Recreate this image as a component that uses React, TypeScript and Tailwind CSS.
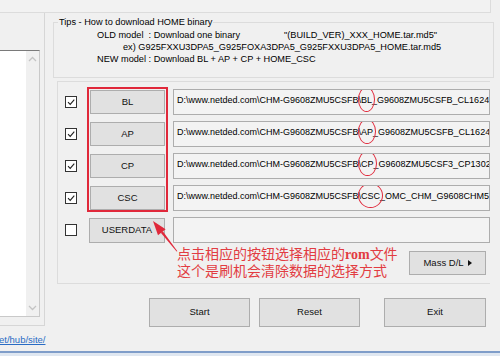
import React from "react";

const rows = [
  { label: "BL", mark: "BL", rest: "_G9608ZMU5CSFB_CL16241986_QB14543829_REV00_user_low_ship.tar.md5", checked: true },
  { label: "AP", mark: "AP", rest: "_G9608ZMU5CSFB_CL16241986_QB14543829_REV00_user_low_ship.tar.md5", checked: true },
  { label: "CP", mark: "CP", rest: "_G9608ZMU5CSF3_CP13025867_CL16241986_QB14543829.tar.md5", checked: true },
  { label: "CSC", mark: "CSC", rest: "_OMC_CHM_G9608CHM5CSFB_CL16241986_QB14543829.tar.md5", checked: true },
];

const prefix = "D:\\www.netded.com\\CHM-G9608ZMU5CSFB\\";

function Checkbox({ checked }: { checked: boolean }) {
  return (
    <div className="w-[12px] h-[12px] shrink-0 bg-white border border-[#333333] flex items-center justify-center">
      {checked && (
        <svg width="10" height="10" viewBox="0 0 10 10">
          <path d="M2 5.2 L4.2 7.4 L8.3 2.6" fill="none" stroke="#222" strokeWidth="1.1" />
        </svg>
      )}
    </div>
  );
}

function Btn({ children, className = "" }: { children: React.ReactNode; className?: string }) {
  return (
    <div
      className={`flex items-center justify-center bg-[#e1e1e1] border border-[#adadad] text-[9.5px] text-[#111] ${className}`}
    >
      {children}
    </div>
  );
}

export default function App() {
  return (
    <div className="w-[500px] h-[356px] overflow-hidden bg-[#f0f0f0] flex flex-col font-['Liberation_Sans','Noto_Sans_CJK_SC',sans-serif] text-black">
      {/* top strip */}
      <div className="h-[13px] shrink-0 flex">
        <div className="w-[491px] border-r border-b border-[#dcdcdc] bg-[#f2f2f2]" />
      </div>

      <div className="flex h-[338px]">
        {/* left column */}
        <div className="w-[45px] shrink-0 flex flex-col">
          <div className="h-[313px] border-r border-b border-[#d6d6d6] pt-[37px] pr-[4px]">
            <div className="h-[267px] w-[40px] flex bg-white border-t border-[#7a7a7a] border-r border-b border-r-[#c9c9c9] border-b-[#c9c9c9]">
              <div className="flex-1" />
              <div className="w-[13px] bg-[#f0f0f0] flex flex-col items-center justify-between py-[5px]">
                <svg width="9" height="6" viewBox="0 0 9 6">
                  <path d="M1 5 L4.5 1.5 L8 5" fill="none" stroke="#c4c4c4" strokeWidth="1.3" />
                </svg>
                <svg width="9" height="6" viewBox="0 0 9 6">
                  <path d="M1 1 L4.5 4.5 L8 1" fill="none" stroke="#c4c4c4" strokeWidth="1.3" />
                </svg>
              </div>
            </div>
          </div>
          <div className="mt-[8px] -ml-[1px] text-[9.5px] leading-[12px] text-[#2a6cc4] underline whitespace-nowrap">
            et/hub/site/
          </div>
        </div>

        {/* right column */}
        <div className="flex-1 flex flex-col">
          <fieldset className="ml-[8px] mt-[3px] w-[441px] h-[62px] border border-[#dcdcdc] px-[4px]">
            <legend className="text-[9.2px] leading-[12px] px-[1px]">Tips - How to download HOME binary</legend>
            <div className="text-[9.2px] leading-[12px] whitespace-nowrap pl-[39px] pt-[1px]">
              <div>
                <span className="inline-block w-[187px]">OLD model&nbsp; : Download one binary</span>
                <span>"(BUILD_VER)_XXX_HOME.tar.md5"</span>
              </div>
              <div className="pl-[26px]">ex) G925FXXU3DPA5_G925FOXA3DPA5_G925FXXU3DPA5_HOME.tar.md5</div>
              <div>NEW model : Download BL + AP + CP + HOME_CSC</div>
            </div>
          </fieldset>

          {/* file panel */}
          <div className="relative ml-[12px] mt-[3px] w-[433px] h-[203px] border-l border-t border-b border-[#dcdcdc] pt-[7px] flex flex-col">
            <div className="flex flex-col gap-[6px]">
              {rows.map((r, i) => (
                <div key={r.label} className="flex items-center h-[26px]">
                  <div className="ml-[7px]">
                    <Checkbox checked={r.checked} />
                  </div>
                  <Btn
                    className={`ml-[13px] w-[75px] h-[24px] ${i === 0 ? "border-[#2a7ad5]" : ""}`}
                  >
                    {r.label}
                  </Btn>
                  <div className="ml-[8px] w-[317px] h-[26px] bg-[#f3f3f3] border border-[#adadad] overflow-hidden whitespace-nowrap text-[9px] leading-[12px] pl-[3px] pt-[4px]">
                    {prefix}
                    <span className="relative">
                      {r.mark}
                      <span className="absolute -left-[3px] -right-[3px] -top-[8px] -bottom-[7px] rounded-[50%] border-[1.5px] border-[#e0283a]" />
                    </span>
                    {r.rest}
                  </div>
                </div>
              ))}
              <div className="flex items-center h-[26px]">
                <div className="ml-[7px]">
                  <Checkbox checked={false} />
                </div>
                <Btn className="ml-[12px] w-[76px] h-[25px]">USERDATA</Btn>
                <div className="ml-[8px] w-[317px] h-[26px] bg-[#f3f3f3] border border-[#adadad]" />
              </div>
            </div>

            <div className="flex mt-[3px]">
              <div className="ml-[119px] text-[14px] leading-[17px] text-[#e23c42] whitespace-nowrap font-['Liberation_Serif','Noto_Sans_CJK_SC',serif]">
                <div>
                  点击相应的按钮选择相应的<span className="font-bold">rom</span>文件
                </div>
                <div>这个是刷机会清除数据的选择方式</div>
              </div>
              <Btn className="ml-auto mr-[4px] mt-[5px] w-[77px] h-[24px] gap-[4px]">
                <span>Mass D/L</span>
                <svg width="4" height="6" viewBox="0 0 4 6">
                  <path d="M0 0 L4 3 L0 6 Z" fill="#111" />
                </svg>
              </Btn>
            </div>

            {/* annotations */}
            <div className="absolute left-[29px] top-[5px] w-[81px] h-[125px] border-2 border-[#e0283a]" />
            <svg className="absolute left-[87px] top-[134px]" width="40" height="40" viewBox="0 0 40 40">
              <path d="M8 5 L20.6 13.2 L13 19.3 Z" fill="#e0283a" />
              <path d="M15.8 16.8 L17.8 15.2 L32.4 35.2 L31.6 35.6 Z" fill="#e0283a" />
            </svg>
          </div>

          {/* bottom buttons */}
          <div className="flex mt-[14px] ml-[104px]">
            <Btn className="w-[101px] h-[29px]">Start</Btn>
            <Btn className="ml-[9px] w-[101px] h-[29px]">Reset</Btn>
            <Btn className="ml-[24px] w-[102px] h-[29px]">Exit</Btn>
          </div>
        </div>
      </div>

      {/* window frame */}
      <div className="h-[5px] shrink-0 border-t-2 border-[#7f9dc9] bg-[#dfe7f1]" />
    </div>
  );
}
